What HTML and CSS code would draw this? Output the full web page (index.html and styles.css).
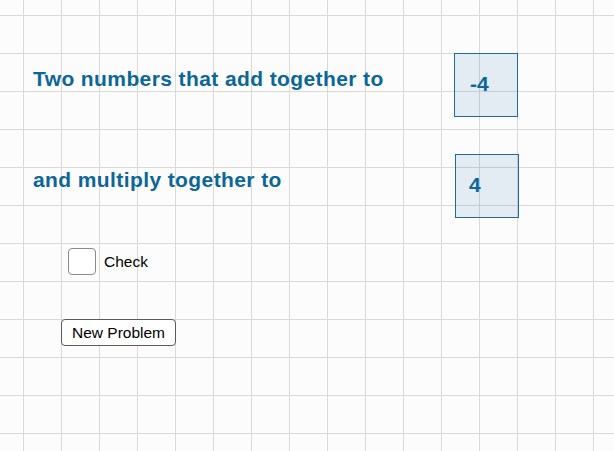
FILE: index.html
```html
<!DOCTYPE html>
<html lang="en">

<head>
  <meta charset="UTF-8">
  <meta name="viewport" content="width=device-width, initial-scale=1.0">
  <title>Sum and Product</title>
  <link rel="stylesheet" href="styles.css">
</head>

<body>
  <div class="sheet">
    <div class="row row-sum">
      <span class="prompt">Two numbers that add together to</span>
      <div class="answer">-4</div>
    </div>
    <div class="row row-product">
      <span class="prompt">and multiply together to</span>
      <div class="answer">4</div>
    </div>

    <label class="check">
      <input type="checkbox" id="check">
      <span>Check</span>
    </label>

    <button class="new-problem">New Problem</button>
  </div>
</body>

</html>
```

FILE: styles.css
```css
/* Page */
html, body {
  margin: 0;
  height: 100%;
}
body {
  background-color: #fcfcfc;
  background-image:
    linear-gradient(to right, #d9d9d9 1px, transparent 1px),
    linear-gradient(to bottom, #d9d9d9 1px, transparent 1px);
  background-size: 38px 38px;
  background-position: 23px 15px;
  font-family: 'Liberation Sans', Arial, sans-serif;
  color: #000;
}
.sheet {
  padding: 53px 0 0 33px;
}

/* Prompts */
.row {
  display: flex;
  align-items: flex-start;
  height: 64px;
}
.row-product {
  margin-top: 37px;
}
.prompt {
  width: 421px;
  margin-top: 14px;
  color: #0b6699;
  font-weight: 700;
  font-size: 21px;
  line-height: 24px;
  letter-spacing: 0.4px;
}
.row-product .prompt {
  width: 422px;
}
.answer {
  box-sizing: border-box;
  width: 64px;
  height: 64px;
  padding: 18px 0 0 15px;
  border: 1px solid #1f6c9c;
  background: rgba(10, 100, 160, 0.1);
  color: #0b6699;
  font-weight: 700;
  font-size: 21px;
  line-height: 24px;
}
.row-product .answer {
  padding-left: 13px;
}

/* Check */
.check {
  display: flex;
  align-items: center;
  gap: 8px;
  margin: 30px 0 0 35px;
  font-size: 15.5px;
  width: max-content;
}
.check input {
  appearance: none;
  margin: 0;
  width: 28px;
  height: 27px;
  border: 1.5px solid #8a8a8a;
  border-radius: 4px;
  background: #fff;
}

/* Button */
.new-problem {
  display: block;
  margin: 44px 0 0 28px;
  box-sizing: border-box;
  width: 115px;
  height: 27px;
  padding: 0;
  border: 1px solid #5a5a5a;
  border-radius: 4px;
  background: #fff;
  color: #000;
  font-family: 'Liberation Sans', Arial, sans-serif;
  font-size: 15.5px;
}
```
